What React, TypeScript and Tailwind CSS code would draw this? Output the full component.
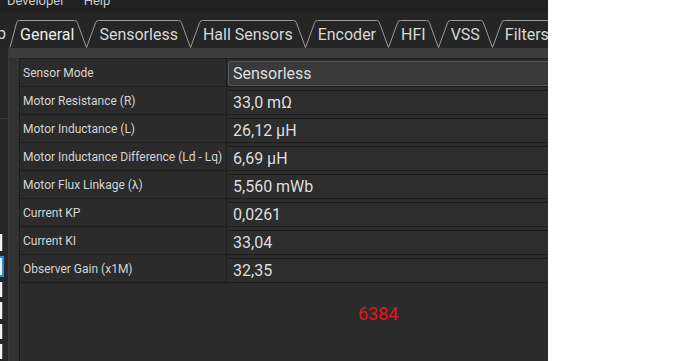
import React from 'react';

const tabs = ['General', 'Sensorless', 'Hall Sensors', 'Encoder', 'HFI', 'VSS', 'Filters'];

const rows: { label: string; value: string; combo?: boolean }[] = [
  { label: 'Sensor Mode', value: 'Sensorless', combo: true },
  { label: 'Motor Resistance (R)', value: '33,0 mΩ' },
  { label: 'Motor Inductance (L)', value: '26,12 µH' },
  { label: 'Motor Inductance Difference (Ld - Lq)', value: '6,69 µH' },
  { label: 'Motor Flux Linkage (λ)', value: '5,560 mWb' },
  { label: 'Current KP', value: '0,0261' },
  { label: 'Current KI', value: '33,04' },
  { label: 'Observer Gain (x1M)', value: '32,35' },
];

// separator between two tabs: right slant of one, left slant of the next
const TabJoint = () => (
  <svg width="25" height="28" viewBox="0 0 25 28" className="shrink-0">
    <path
      d="M0 0.5 H0.6 Q2.6 0.5 3.3 2.5 L12.5 27.5 L21.7 2.5 Q22.4 0.5 24.4 0.5 H25"
      fill="none"
      stroke="#9c9c9c"
      strokeWidth="1"
    />
  </svg>
);

const TabStart = () => (
  <svg width="14" height="28" viewBox="0 0 14 28" className="shrink-0">
    <path d="M4 27.5 L10.7 2.5 Q11.4 0.5 13.4 0.5 H14" fill="none" stroke="#9c9c9c" strokeWidth="1" />
  </svg>
);

export default function App() {
  return (
    <div className="flex h-[361px] w-[681px] overflow-hidden bg-white" style={{ fontFamily: 'Roboto, "Liberation Sans", sans-serif' }}>
      <div className="flex w-[548px] shrink-0 flex-col overflow-hidden bg-[#252525]">
        {/* Menu bar, cut off at the top */}
        <div className="h-[12px] overflow-hidden bg-[#212121]">
          <div className="-mt-[7px] flex gap-[19px] pl-[7px] text-[13px] leading-[16px] text-[#c9c9c9]">
            <span>Developer</span>
            <span>Help</span>
          </div>
        </div>

        {/* Tab bar */}
        <div className="mt-[8px] flex h-[28px] items-stretch overflow-hidden whitespace-nowrap text-[16px] leading-[27px] text-[#d8d8d8]">
          <div className="flex w-[6px] shrink-0 justify-end overflow-hidden">
            <span>Setup</span>
          </div>
          <TabStart />
          {tabs.map((t, i) => (
            <React.Fragment key={t}>
              <span className={`shrink-0 border-t border-[#9c9c9c] ${i === 0 ? 'text-[#ececec]' : ''}`}>{t}</span>
              <TabJoint />
            </React.Fragment>
          ))}
        </div>

        {/* Body */}
        <div className="flex flex-1">
          {/* left strip of the neighbouring widget */}
          <div className="flex w-[9px] shrink-0 flex-col border-r border-[#3a3a3a] bg-[#262626]">
            <div className="h-[71px] border-b border-[#363636]" />
            <div className="mt-[115px] flex flex-col gap-[5px]">
              <div className="h-[17px] w-[3px] border-r border-[#555] bg-[#f2f2f2]" />
              <div className="h-[21px] w-[4px] border-y-2 border-r-2 border-[#1e90e8] bg-[#f2f2f2]" />
              <div className="h-[15px] w-[3px] border-r border-[#555] bg-[#f2f2f2]" />
              <div className="h-[17px] w-[3px] border-r border-[#555] bg-[#f2f2f2]" />
              <div className="h-[15px] w-[3px] border-r border-[#555] bg-[#f2f2f2]" />
              <div className="h-[15px] w-[3px] border-r border-[#555] bg-[#f2f2f2]" />
            </div>
          </div>

          {/* tab page */}
          <div className="flex flex-1 flex-col bg-[#323232]">
            <div className="h-[10px] shrink-0 bg-[#3d3d3d]" />
            <div className="-mr-[12px] ml-[10px] flex flex-1 flex-col border-l border-t border-[#1c1c1c] bg-[#2b2b2b]">
              {rows.map((r) => (
                <div key={r.label} className="flex h-[28px] border-b border-[#1e1e1e]">
                  <div className="flex w-[207px] shrink-0 items-center border-r border-[#1e1e1e] pl-[3px] text-[12px] text-[#d4d4d4]">
                    {r.label}
                  </div>
                  <div className="flex flex-1 flex-col pl-[1px] pt-[2px]">
                    {r.combo ? (
                      <div className="flex h-[25px] items-center rounded-[2px] border border-[#555] bg-[#3a3a3a] pl-[4px] text-[16px] text-[#dedede]">
                        {r.value}
                      </div>
                    ) : (
                      <div className="mt-[1px] flex h-[24px] items-center border-t border-[#1a1a1a] bg-[#2d2d2d] pl-[5px] text-[16px] text-[#dedede]">
                        {r.value}
                      </div>
                    )}
                  </div>
                </div>
              ))}
              <div className="ml-[338px] mt-[17px] text-[18px] text-[#e0161b]">6384</div>
            </div>
          </div>
        </div>
      </div>
    </div>
  );
}
